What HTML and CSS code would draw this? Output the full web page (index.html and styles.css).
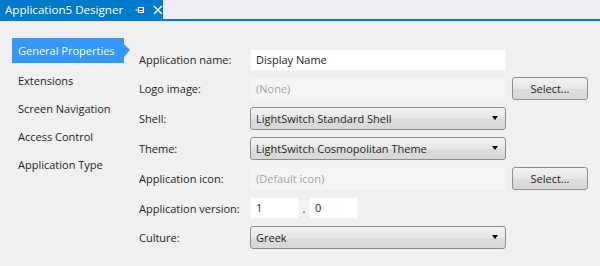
FILE: index.html
```html
<!DOCTYPE html>
<html lang="en">
<head>
  <meta charset="UTF-8" />
  <title>Application5 Designer</title>
  <link rel="stylesheet" href="styles.css">
</head>
<body>
  <div class="tabbar">
    <div class="tab">
      <span class="tab-title">Application5 Designer</span>
      <svg class="pin" width="10" height="10" viewBox="0 0 10 10">
        <path d="M0.5 5h3M3.5 2v6M3.5 2.5h5v5h-5M3.5 5.5h5" fill="none" stroke="#fff" stroke-width="1.2"/>
      </svg>
      <svg class="close" width="10" height="10" viewBox="0 0 10 10">
        <path d="M1 1l8 8M9 1l-8 8" stroke="#fff" stroke-width="1.4"/>
      </svg>
    </div>
  </div>

  <div class="designer">
    <ul class="nav">
      <li class="active">General Properties</li>
      <li>Extensions</li>
      <li>Screen Navigation</li>
      <li>Access Control</li>
      <li>Application Type</li>
    </ul>

    <div class="form">
      <label>Application name:</label>
      <div class="textbox">Display Name</div>
      <div></div>

      <label>Logo image:</label>
      <div class="textbox disabled">(None)</div>
      <button>Select...</button>

      <label>Shell:</label>
      <div class="combo">LightSwitch Standard Shell</div>
      <div></div>

      <label>Theme:</label>
      <div class="combo">LightSwitch Cosmopolitan Theme</div>
      <div></div>

      <label>Application icon:</label>
      <div class="textbox disabled">(Default icon)</div>
      <button>Select...</button>

      <label>Application version:</label>
      <div class="version">
        <div class="textbox small">1</div>
        <span class="dot">.</span>
        <div class="textbox small">0</div>
      </div>
      <div></div>

      <label>Culture:</label>
      <div class="combo">Greek</div>
      <div></div>
    </div>
  </div>
</body>
</html>
```

FILE: styles.css
```css
body {
  margin: 0;
  font-family: "Segoe UI", "Open Sans", sans-serif;
  font-size: 11px;
  color: #1e1e1e;
  background-color: #f0f0f0;
}

.tabbar {
  height: 19px;
  background-color: #eeeef2;
  border-bottom: 2px solid #007acc;
}

.tab {
  display: flex;
  align-items: center;
  width: 163px;
  height: 19px;
  padding-left: 5px;
  box-sizing: border-box;
  background-color: #007acc;
  color: #ffffff;
  white-space: nowrap;
}

.tab-title {
  font-size: 11.6px;
  margin-right: 12px;
}

.pin {
  margin-right: 8px;
}

.designer {
  display: flex;
}

.nav {
  list-style: none;
  margin: 17px 0 0 12px;
  padding: 0;
  width: 127px;
  white-space: nowrap;
}

.nav li {
  height: 28px;
  line-height: 28px;
  padding-left: 6px;
}

.nav li.active {
  position: relative;
  width: 106px;
  height: 25px;
  line-height: 25px;
  margin-bottom: 4px;
  background-color: #3399ff;
  color: #ffffff;
}

.nav li.active::after {
  content: "";
  position: absolute;
  right: -6px;
  top: 6px;
  border-top: 6px solid transparent;
  border-bottom: 7px solid transparent;
  border-left: 6px solid #3399ff;
}

.form {
  display: grid;
  grid-template-columns: 105px 256px 76px;
  grid-template-rows: 29px 29px 30px 31px 29px 30px 29px;
  column-gap: 6px;
  align-items: center;
  margin-top: 24px;
  white-space: nowrap;
}

.textbox {
  height: 20px;
  line-height: 20px;
  padding-left: 5px;
  background-color: #ffffff;
  border: 1px solid #f4f4f4;
}

.textbox.disabled {
  background-color: #f5f5f5;
  color: #a2a2a2;
}

.combo {
  position: relative;
  height: 21px;
  line-height: 21px;
  padding-left: 5px;
  border: 1px solid #8c8c8c;
  border-radius: 3px;
  background: linear-gradient(#f3f3f3, #e6e6e6 50%, #dcdcdc 51%, #d8d8d8);
}

.combo::after {
  content: "";
  position: absolute;
  right: 7px;
  top: 8px;
  border-left: 3px solid transparent;
  border-right: 3px solid transparent;
  border-top: 4px solid #000000;
}

button {
  height: 23px;
  padding: 0;
  font: inherit;
  color: #1e1e1e;
  border: 1px solid #8c8c8c;
  border-radius: 3px;
  background: linear-gradient(#f3f3f3, #e6e6e6 50%, #dcdcdc 51%, #d8d8d8);
}

.version {
  display: flex;
  align-items: center;
}

.textbox.small {
  width: 42px;
}

.dot {
  width: 10px;
  text-align: center;
}
```
